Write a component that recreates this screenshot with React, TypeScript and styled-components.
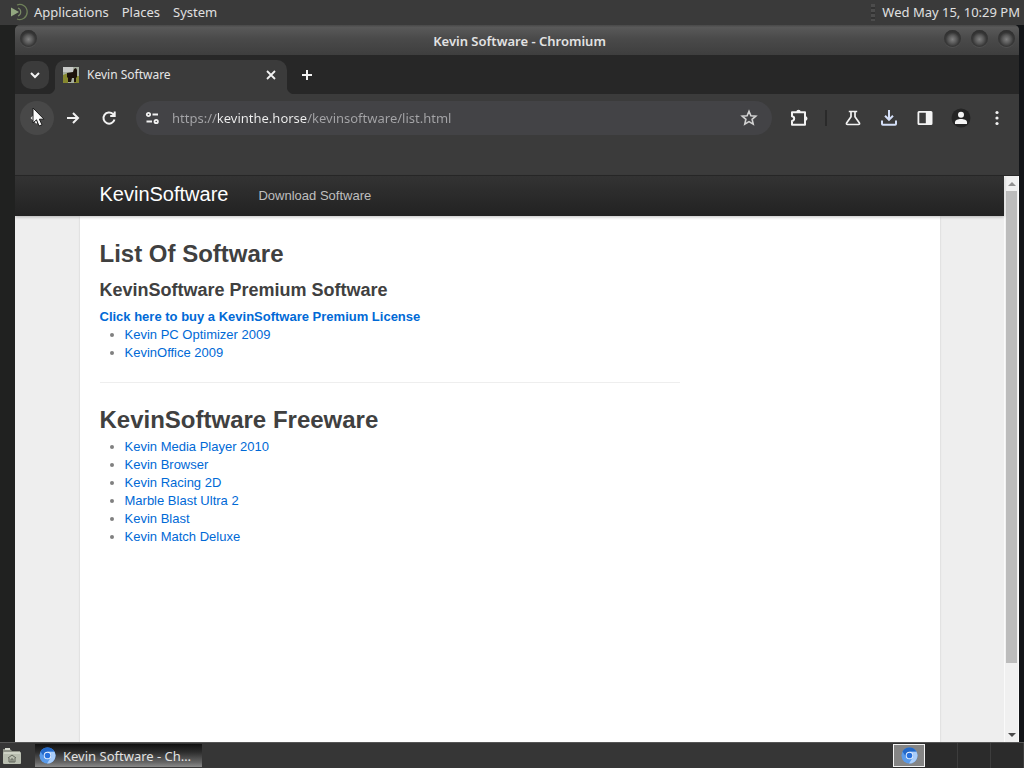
import React from "react";
import styled, { createGlobalStyle } from "styled-components";

const Global = createGlobalStyle`
  * { box-sizing: border-box; }
  html, body, #root { height: 100%; }
  body { margin: 0; background: #1e1f1e; overflow: hidden; }
  button { border: 0; padding: 0; background: none; color: inherit; font: inherit; }
  svg { display: block; flex: none; }
`;

const ui = `"Noto Sans", "Open Sans", sans-serif`;

const Desktop = styled.div`
  display: flex;
  flex-direction: column;
  height: 100vh;
  font: 13px/18px ${ui};
  color: #e0e0e0;
`;

const TopPanel = styled.header`
  display: flex;
  align-items: center;
  height: 25px;
  flex: none;
  padding: 0 4px 1px 10px;
  background: #3a3a3a;
`;

const MenuList = styled.nav`
  display: flex;
  gap: 13px;
  padding-left: 6px;
`;

const PanelGrip = styled.span`
  width: 4px;
  height: 17px;
  margin: 0 7px 0 auto;
  background: repeating-linear-gradient(#4c4c4c 0 3px, #333 3px 5px);
`;

const Workspace = styled.div`
  display: flex;
  flex: 1;
  min-height: 0;
  padding: 0 5px 0 15px;
  background: linear-gradient(90deg, #202120 50%, #121417 50%);
`;

const Window = styled.main`
  display: flex;
  flex-direction: column;
  flex: 1;
  min-width: 0;
  background: #3b3b3b;
  border-radius: 5px 5px 0 0;
  overflow: hidden;
`;

const TitleBar = styled.div`
  display: flex;
  align-items: center;
  height: 30px;
  flex: none;
  padding: 0 4px 0 5px;
  background: linear-gradient(#484848, #595959 8%, #4a4a4a 45%, #3e3e3e);
`;

const WindowTitle = styled.h1`
  flex: 1;
  margin: 0;
  padding: 2px 0 0 58px;
  text-align: center;
  font-size: 13px;
  line-height: 18px;
  font-weight: 600;
  color: #e2e2e2;
`;

const WindowControls = styled.div`
  display: flex;
  gap: 10px;
`;

const RingButton = styled.button`
  width: 17px;
  height: 17px;
  margin-bottom: 3px;
  border-radius: 50%;
  background: radial-gradient(circle at 50% 55%, #808080 0, #5c5c5c 30%, #383838 55%, #4c4c4c 100%);
  box-shadow: inset 0 2px 2px #303030, 0 1px 0 #505050;
`;

const TabStrip = styled.div`
  display: flex;
  align-items: flex-end;
  height: 39px;
  flex: none;
  padding-left: 6px;
  background: #272727;
`;

const TabSearch = styled.button`
  display: grid;
  place-items: center;
  width: 28px;
  height: 28px;
  margin: 0 6px 5px 0;
  border-radius: 10px;
  background: #3b3b3b;
  color: #f4f4f4;
`;

const Tab = styled.div`
  position: relative;
  display: flex;
  align-items: center;
  width: 232px;
  height: 34px;
  padding: 0 8px 4px 8px;
  border-radius: 10px 10px 0 0;
  background: #3b3b3b;
  color: #e6e6e6;
  &::before, &::after {
    content: "";
    position: absolute;
    bottom: 0;
    width: 8px;
    height: 8px;
  }
  &::before { right: 100%; background: radial-gradient(circle at 0 0, #272727 8px, #3b3b3b 9px); }
  &::after { left: 100%; background: radial-gradient(circle at 100% 0, #272727 8px, #3b3b3b 9px); }
`;

const TabLabel = styled.span`
  flex: 1;
  padding-left: 8px;
  font-size: 12px;
`;

const IconButton = styled.button<{ $lit?: boolean }>`
  display: grid;
  place-items: center;
  flex: none;
  width: 34px;
  height: 34px;
  border-radius: 50%;
  color: #f2f2f2;
  background: ${(p) => (p.$lit ? "#484848" : "transparent")};
`;

const SmallButton = styled(IconButton)`
  width: 16px;
  height: 16px;
`;

const NewTab = styled(SmallButton)`
  margin: 0 0 11px 12px;
`;

const Toolbar = styled.div`
  display: flex;
  align-items: center;
  height: 48px;
  flex: none;
  gap: 2px;
  padding: 0 5px;
`;

const AddressBar = styled.form`
  display: flex;
  align-items: center;
  flex: 1;
  height: 34px;
  margin: 0 8px;
  padding: 0 6px 0 0;
  border-radius: 17px;
  background: #434346;
`;

const AddressInput = styled.input`
  flex: 1;
  min-width: 0;
  height: 20px;
  padding: 0;
  border: 0;
  outline: 0;
  margin-left: 2px;
  font: 13px/20px ${ui};
  background: linear-gradient(90deg, #a5a5a8 46px, #f0f0f0 46px 135px, #a5a5a8 135px);
  background-clip: text;
  -webkit-background-clip: text;
  -webkit-text-fill-color: transparent;
`;

const ToolDivider = styled.span`
  width: 2px;
  height: 16px;
  margin: 0 7px;
  background: #2a2a2a;
`;

const BookmarksBar = styled.div`
  height: 34px;
  flex: none;
  border-bottom: 1px solid #282828;
`;

const Viewport = styled.div`
  display: flex;
  flex: 1;
  min-height: 0;
  background: #eee;
`;

const Page = styled.div`
  display: flex;
  flex-direction: column;
  flex: 1;
  min-width: 0;
  font: 13px/18px "Liberation Sans", Arial, sans-serif;
  color: #808080;
`;

const NavBar = styled.nav`
  height: 40px;
  flex: none;
  z-index: 1;
  background: linear-gradient(#333, #222);
  box-shadow: 0 1px 3px rgba(0, 0, 0, 0.25);
`;

const NavInner = styled.div`
  display: flex;
  align-items: center;
  gap: 30px;
  max-width: 820px;
  height: 100%;
  margin: 0 auto;
`;

const Brand = styled.a`
  padding-bottom: 4px;
  font-size: 20px;
  line-height: 20px;
  color: #fff;
  text-decoration: none;
`;

const NavLink = styled.a`
  color: #bfbfbf;
  text-decoration: none;
`;

const Sheet = styled.div`
  flex: 1;
  width: 100%;
  max-width: 860px;
  margin: 0 auto;
  padding: 20px;
  background: #fff;
  box-shadow: 0 1px 2px rgba(0, 0, 0, 0.15);
`;

const Column = styled.section`
  max-width: 580px;
`;

const Heading = styled.h2`
  margin: 0;
  font-size: 24px;
  line-height: 36px;
  color: #404040;
`;

const SubHeading = styled.h3`
  margin: 0;
  font-size: 18px;
  line-height: 36px;
  color: #404040;
`;

const TextLink = styled.a<{ $strong?: boolean }>`
  color: #0069d6;
  font-weight: ${(p) => (p.$strong ? 700 : 400)};
  text-decoration: none;
`;

const SoftwareList = styled.ul`
  margin: 0 0 0 25px;
  padding: 0;
`;

const Rule = styled.hr`
  margin: 20px 0 19px;
  border: 0;
  border-bottom: 1px solid #eee;
`;

const ScrollBar = styled.div`
  display: flex;
  flex-direction: column;
  width: 15px;
  flex: none;
  background: #f0f0f0;
  border-left: 1px solid #fafafa;
  border-right: 1px solid #fafafa;
`;

const ScrollArrow = styled.button`
  display: grid;
  place-items: center;
  height: 15px;
  width: 100%;
`;

const ScrollTrack = styled.div`
  flex: 1;
  padding: 0 1px;
`;

const ScrollThumb = styled.div`
  height: 88%;
  background: #bcbcbc;
`;

const BottomPanel = styled.footer`
  display: flex;
  align-items: center;
  height: 26px;
  flex: none;
  padding-left: 2px;
  background: #363636;
  border-top: 1px solid #565656;
`;

const TaskButton = styled.button`
  display: flex;
  align-items: center;
  gap: 7px;
  width: 167px;
  height: 23px;
  margin-left: 13px;
  padding: 0 4px;
  background: linear-gradient(#111, #2c2c2c 35%, #666 80%, #8a8a8a);
  color: #e2e2e2;
`;

const TaskLabel = styled.span`
  white-space: nowrap;
`;

const Pager = styled.div`
  display: flex;
  margin-left: auto;
  height: 25px;
  align-items: center;
  background: #2b2b2b;
`;

const Cell = styled.button<{ $active?: boolean }>`
  display: grid;
  place-items: center;
  width: ${(p) => (p.$active ? 32 : 33)}px;
  height: ${(p) => (p.$active ? 23 : 25)}px;
  background: ${(p) => (p.$active ? "#858585" : "#2b2b2b")};
  border: solid ${(p) => (p.$active ? "#f2f2f2" : "#3d3d3d")};
  border-width: ${(p) => (p.$active ? "1px" : "0 1px 0 0")};
`;

const Pointer = styled.svg`
  position: absolute;
  left: 32px;
  top: 107px;
`;

const Line = ({ size = 16, d, w = 2 }: { size?: number; d: string; w?: number }) => (
  <svg width={size} height={size} viewBox="0 0 16 16" fill="none" stroke="currentColor" strokeWidth={w}>
    <path d={d} />
  </svg>
);

const MateLogo = () => (
  <svg width="18" height="18" viewBox="0 0 18 18" fill="none">
    <path d="M7 2a7.500 7.500 0 1 1 0 14" stroke="#6f8059" strokeWidth="1.300" />
    <path d="M8 5a4.300 4.300 0 0 1 0 8" stroke="#7a8b66" strokeWidth="1.200" />
    <path d="M1 4.500 9 9l-8 4.500Z" fill="#93a880" />
  </svg>
);

const HorseFavicon = () => (
  <svg width="16" height="16" viewBox="0 0 16 16">
    <path fill="#a5ad9f" d="M0 0h16v16H0z" />
    <path fill="#86882f" d="M0 8 5 6v10H0zM11 9h5v7h-5z" />
    <path fill="#c9cbc9" d="M0 0h10v5H0z" />
    <path fill="#1d130c" d="M4 6 10 5l1-3 2-1 1 2v7l-1 1v4h-2v-4H9l-1 4H5V11L4 10z" />
  </svg>
);

const Chromium = () => (
  <svg width="17" height="17" viewBox="0 0 18 18">
    <circle cx="9" cy="9" r="8.500" fill="#5a9bea" />
    <path d="M1.600 4.700A8.500 8.500 0 0 1 16.400 5H9a4 4 0 0 0-3.800 5.200Z" fill="#2369c9" />
    <path d="M16.400 5A8.500 8.500 0 0 1 8.500 17.500L12.500 11A4 4 0 0 0 9 5Z" fill="#a9cdfa" />
    <circle cx="9" cy="9" r="4" fill="#eef5ff" />
    <circle cx="9" cy="9" r="3" fill="#2670dc" />
  </svg>
);

const Folder = () => (
  <svg width="20" height="18" viewBox="0 0 20 18">
    <path d="M1 2h7l2 2h8v4H1z" fill="#8f9388" />
    <path d="M3 1h5v2H3z" fill="#d8dbd0" />
    <rect x="1" y="5" width="18" height="12" rx="1" fill="#b9beb0" />
    <path d="M2 6h16" stroke="#e2e5da" />
    <path d="m6 11 4-3 4 3M7 11v4h6v-4M9 15v-3h2v3" fill="none" stroke="#62675c" />
  </svg>
);

const Sliders = () => (
  <svg width="16" height="16" viewBox="0 0 16 16" fill="none" stroke="#f2f2f2" strokeWidth="1.800">
    <circle cx="3.500" cy="4.500" r="1.700" />
    <path d="M7.500 4.500h5.500M1.500 11.500h5.500" />
    <circle cx="11.200" cy="11.500" r="1.700" />
  </svg>
);

const Star = () => (
  <svg width="18" height="18" viewBox="0 0 18 18" fill="none" stroke="#d2d2d2" strokeWidth="1.600">
    <path d="m9 2.200 1.900 4.500 4.900.4-3.700 3.200 1.100 4.800L9 12.600l-4.200 2.500 1.100-4.800-3.700-3.200 4.900-.4Z" />
  </svg>
);

const Puzzle = () => (
  <svg width="18" height="18" viewBox="0 0 18 18" fill="none" stroke="#f2f2f2" strokeWidth="2" strokeLinejoin="round">
    <path d="M2 3.300h13v12.400H2v-3.800c2.900-.5 2.900-4.200 0-4.700Z" />
    <path d="M6.300 3a2.200 2.200 0 0 1 4.400 0ZM15.300 7.300a2.200 2.200 0 0 1 0 4.400Z" fill="#f2f2f2" stroke="none" />
  </svg>
);

const Flask = () => (
  <svg width="18" height="18" viewBox="0 0 18 18" fill="none" stroke="#f2f2f2" strokeWidth="1.700" strokeLinejoin="round">
    <path d="M4.800 2.500h8.400M7 2.500v5.300L2.600 14q-.6 1.500 1 1.500h10.800q1.600 0 1-1.500L11 7.800V2.500" />
  </svg>
);

const Download = () => (
  <svg width="18" height="18" viewBox="0 0 18 18" fill="none" stroke="#d4dff8" strokeWidth="2">
    <path d="M9 1v9.500M5 6.800l4 4 4-4M2 11.500V15q0 .8.8.8h12.400q.8 0 .8-.8v-3.500" />
  </svg>
);

const SidePanel = () => (
  <svg width="16" height="16" viewBox="0 0 16 16">
    <path fill="#f4f4f4" fillRule="evenodd" d="M2 1h12q1.500 0 1.500 1.500v11Q15.500 15 14 15H2Q.5 15 .5 13.500v-11Q.5 1 2 1Zm.3 1.700v10.600h6.500V2.700Z" />
  </svg>
);

const Profile = () => (
  <svg width="20" height="20" viewBox="0 0 20 20">
    <circle cx="10" cy="10" r="9.500" fill="#252525" />
    <circle cx="10" cy="6.800" r="3" fill="#f6f6f6" />
    <path d="M4 16v-1.800c0-4.300 12-4.300 12 0V16Z" fill="#f6f6f6" />
  </svg>
);

const Dots = () => (
  <svg width="16" height="16" viewBox="0 0 16 16" fill="#f2f2f2">
    <circle cx="8" cy="2.500" r="1.600" /><circle cx="8" cy="8" r="1.600" /><circle cx="8" cy="13.500" r="1.600" />
  </svg>
);

const premium = ["Kevin PC Optimizer 2009", "KevinOffice 2009"];
const freeware = [
  "Kevin Media Player 2010",
  "Kevin Browser",
  "Kevin Racing 2D",
  "Marble Blast Ultra 2",
  "Kevin Blast",
  "Kevin Match Deluxe",
];

const Links = ({ items }: { items: string[] }) => (
  <SoftwareList>
    {items.map((name) => (
      <li key={name}><TextLink href="#">{name}</TextLink></li>
    ))}
  </SoftwareList>
);

export default function App() {
  return (
    <Desktop>
      <Global />
      <TopPanel>
        <MateLogo />
        <MenuList>
          <button>Applications</button>
          <button>Places</button>
          <button>System</button>
        </MenuList>
        <PanelGrip />
        <time>Wed May 15, 10:29 PM</time>
      </TopPanel>

      <Workspace>
        <Window>
          <TitleBar>
            <RingButton aria-label="Window menu" />
            <WindowTitle>Kevin Software - Chromium</WindowTitle>
            <WindowControls>
              <RingButton aria-label="Minimize" />
              <RingButton aria-label="Maximize" />
              <RingButton aria-label="Close window" />
            </WindowControls>
          </TitleBar>

          <TabStrip>
            <TabSearch aria-label="Search tabs"><Line d="m4 6 4 4 4-4" /></TabSearch>
            <Tab>
              <HorseFavicon />
              <TabLabel>Kevin Software</TabLabel>
              <SmallButton aria-label="Close tab"><Line d="m4 4 8 8M12 4l-8 8" w={1.8} /></SmallButton>
            </Tab>
            <NewTab aria-label="New tab"><Line d="M8 3v10M3 8h10" /></NewTab>
          </TabStrip>

          <Toolbar>
            <IconButton $lit aria-label="Back"><Line d="M13 8H3M8 3 3 8l5 5" /></IconButton>
            <IconButton aria-label="Forward"><Line d="M2 8h11M8 3l5 5-5 5" /></IconButton>
            <IconButton aria-label="Reload">
              <Line d="M13.500 9.500A5.600 5.600 0 1 1 12 4l1.500 1.700M13.700 1.500V6H9.200" />
            </IconButton>
            <AddressBar onSubmit={(e) => e.preventDefault()}>
              <IconButton type="button" aria-label="Site information"><Sliders /></IconButton>
              <AddressInput aria-label="Address" defaultValue="https://kevinthe.horse/kevinsoftware/list.html" />
              <IconButton type="button" aria-label="Bookmark"><Star /></IconButton>
            </AddressBar>
            <IconButton aria-label="Extensions"><Puzzle /></IconButton>
            <ToolDivider />
            <IconButton aria-label="Experiments"><Flask /></IconButton>
            <IconButton aria-label="Downloads"><Download /></IconButton>
            <IconButton aria-label="Side panel"><SidePanel /></IconButton>
            <IconButton aria-label="Profile"><Profile /></IconButton>
            <IconButton aria-label="Menu"><Dots /></IconButton>
          </Toolbar>
          <BookmarksBar />

          <Viewport>
            <Page>
              <NavBar>
                <NavInner>
                  <Brand href="#">KevinSoftware</Brand>
                  <NavLink href="#">Download Software</NavLink>
                </NavInner>
              </NavBar>
              <Sheet>
                <Column>
                  <Heading>List Of Software</Heading>
                  <SubHeading>KevinSoftware Premium Software</SubHeading>
                  <TextLink $strong href="#">Click here to buy a KevinSoftware Premium License</TextLink>
                  <Links items={premium} />
                  <Rule />
                  <Heading>KevinSoftware Freeware</Heading>
                  <Links items={freeware} />
                </Column>
              </Sheet>
            </Page>
            <ScrollBar>
              <ScrollArrow aria-label="Scroll up">
                <svg width="8" height="4" viewBox="0 0 8 4" fill="#909090"><path d="M0 4 4 0l4 4z" /></svg>
              </ScrollArrow>
              <ScrollTrack><ScrollThumb /></ScrollTrack>
              <ScrollArrow aria-label="Scroll down">
                <svg width="8" height="4" viewBox="0 0 8 4" fill="#4a4a4a"><path d="m0 0 4 4 4-4z" /></svg>
              </ScrollArrow>
            </ScrollBar>
          </Viewport>
        </Window>
      </Workspace>

      <BottomPanel>
        <button aria-label="Show files"><Folder /></button>
        <TaskButton>
          <Chromium />
          <TaskLabel>Kevin Software - Ch…</TaskLabel>
        </TaskButton>
        <Pager>
          <Cell $active aria-label="Workspace 1"><Chromium /></Cell>
          <Cell aria-label="Workspace 2" />
          <Cell aria-label="Workspace 3" />
          <Cell aria-label="Workspace 4" />
        </Pager>
      </BottomPanel>

      <Pointer width="14" height="21" viewBox="0 0 14 21">
        <path d="M1 1v15l3.500-3.200L7 19l3-1.200-2.600-5.600H12Z" fill="#fafafa" stroke="#1c1c1c" />
      </Pointer>
    </Desktop>
  );
}
